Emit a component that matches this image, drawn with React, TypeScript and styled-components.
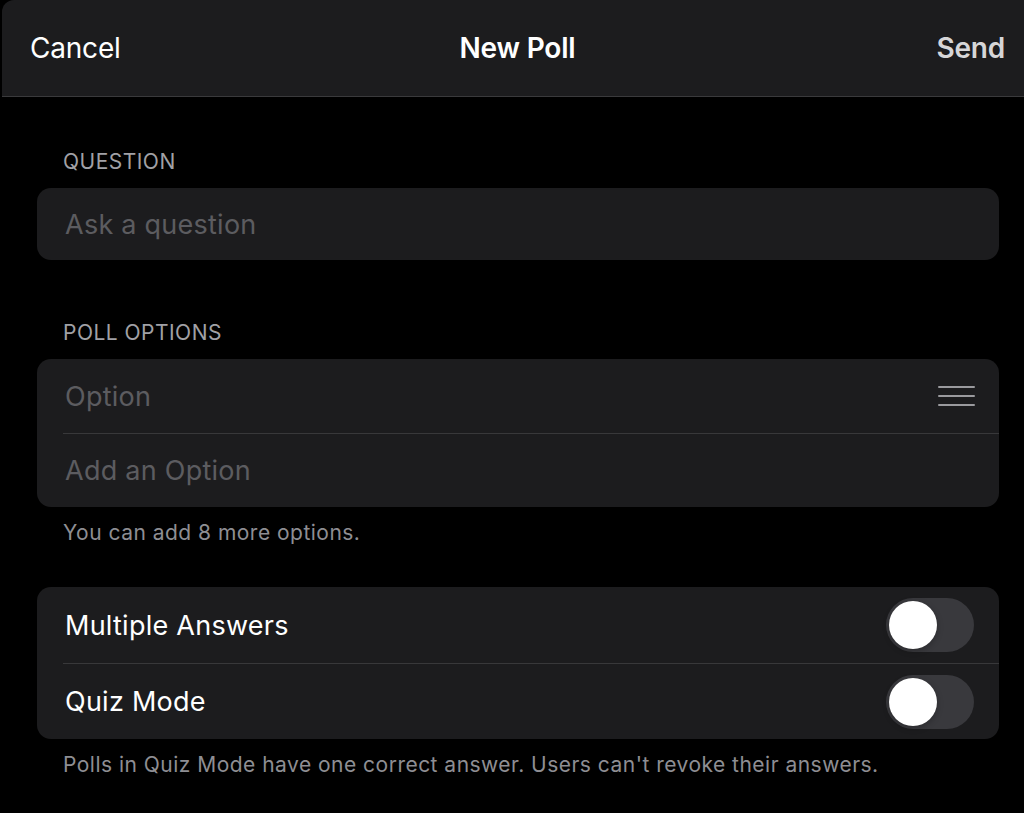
import React from "react";
import styled, { createGlobalStyle } from "styled-components";

const Global = createGlobalStyle`
  html, body { margin: 0; padding: 0; background: #000; }
  body { font-family: Inter, "Noto Sans", "Liberation Sans", sans-serif; -webkit-font-smoothing: antialiased; }
  * { box-sizing: border-box; }
`;

const Page = styled.div`
  width: 1024px;
  height: 813px;
  background: #000;
  overflow: hidden;
  display: flex;
  flex-direction: column;
`;

const Header = styled.header`
  height: 97px;
  margin-left: 2px;
  background: #1c1c1e;
  border-top-left-radius: 12px;
  border-bottom: 1px solid #3a3a3c;
  display: grid;
  grid-template-columns: 1fr auto 1fr;
  align-items: center;
  padding: 0 19px 0 28px;
`;

const NavButton = styled.button<{ $align: "left" | "right"; $muted?: boolean }>`
  background: none;
  border: none;
  padding: 0;
  font-family: inherit;
  font-size: 28px;
  font-weight: ${(p) => (p.$muted ? 600 : 400)};
  color: ${(p) => (p.$muted ? "#d6d6d8" : "#ffffff")};
  justify-self: ${(p) => (p.$align === "left" ? "start" : "end")};
  letter-spacing: -0.2px;
`;

const Title = styled.h1`
  margin: 0;
  font-size: 28px;
  font-weight: 600;
  color: #fff;
  letter-spacing: -0.2px;
`;

const Content = styled.main`
  padding: 53px 25px 0 37px;
  display: flex;
  flex-direction: column;
`;

const SectionLabel = styled.div`
  font-size: 21px;
  line-height: 24px;
  color: #a1a1a6;
  padding-left: 26px;
  margin-bottom: 14px;
  letter-spacing: 0.48px;
`;

const Card = styled.div<{ $gapAfter?: number }>`
  background: #1c1c1e;
  border-radius: 14px;
  overflow: hidden;
  margin-bottom: ${(p) => p.$gapAfter ?? 0}px;
`;

const Row = styled.div<{ $h: number }>`
  height: ${(p) => p.$h}px;
  display: flex;
  align-items: center;
  justify-content: space-between;
  padding: 0 25px 0 28px;
  & + & {
    border-top: 1px solid #38383a;
    margin-left: 26px;
    padding-left: 2px;
  }
`;

const Placeholder = styled.span`
  font-size: 27px;
  color: #5c5c60;
  letter-spacing: 0.25px;
`;

const RowText = styled.span`
  font-size: 27px;
  color: #fff;
  letter-spacing: 0.25px;
`;

const Footer = styled.div<{ $gapAfter?: number }>`
  font-size: 21px;
  line-height: 24px;
  color: #8e8e93;
  padding-left: 26px;
  margin-top: 14px;
  margin-bottom: ${(p) => p.$gapAfter ?? 0}px;
  letter-spacing: 0.48px;
`;

const Handle = styled.div`
  width: 37px;
  margin-right: -1px;
  display: flex;
  flex-direction: column;
  gap: 7px;
  & > span {
    display: block;
    height: 2px;
    background: #9a9a9e;
    border-radius: 1px;
  }
`;

const Track = styled.div<{ $on?: boolean }>`
  width: 88px;
  height: 54px;
  border-radius: 27px;
  background: ${(p) => (p.$on ? "#30d158" : "#39393d")};
  padding: 3px;
  display: flex;
  justify-content: ${(p) => (p.$on ? "flex-end" : "flex-start")};
`;

const Knob = styled.div`
  width: 48px;
  height: 48px;
  border-radius: 50%;
  background: #fff;
  box-shadow: 0 2px 6px rgba(0, 0, 0, 0.25);
`;

const Toggle = ({ on }: { on?: boolean }) => (
  <Track $on={on}>
    <Knob />
  </Track>
);

export default function App() {
  return (
    <>
      <Global />
      <Page>
        <Header>
          <NavButton $align="left">Cancel</NavButton>
          <Title>New Poll</Title>
          <NavButton $align="right" $muted>
            Send
          </NavButton>
        </Header>
        <Content>
          <SectionLabel>QUESTION</SectionLabel>
          <Card $gapAfter={61}>
            <Row $h={72}>
              <Placeholder>Ask a question</Placeholder>
            </Row>
          </Card>
          <SectionLabel>POLL OPTIONS</SectionLabel>
          <Card>
            <Row $h={74}>
              <Placeholder>Option</Placeholder>
              <Handle>
                <span />
                <span />
                <span />
              </Handle>
            </Row>
            <Row $h={74}>
              <Placeholder>Add an Option</Placeholder>
            </Row>
          </Card>
          <Footer $gapAfter={42}>You can add 8 more options.</Footer>
          <Card>
            <Row $h={76}>
              <RowText>Multiple Answers</RowText>
              <Toggle />
            </Row>
            <Row $h={76}>
              <RowText>Quiz Mode</RowText>
              <Toggle />
            </Row>
          </Card>
          <Footer>Polls in Quiz Mode have one correct answer. Users can't revoke their answers.</Footer>
        </Content>
      </Page>
    </>
  );
}
